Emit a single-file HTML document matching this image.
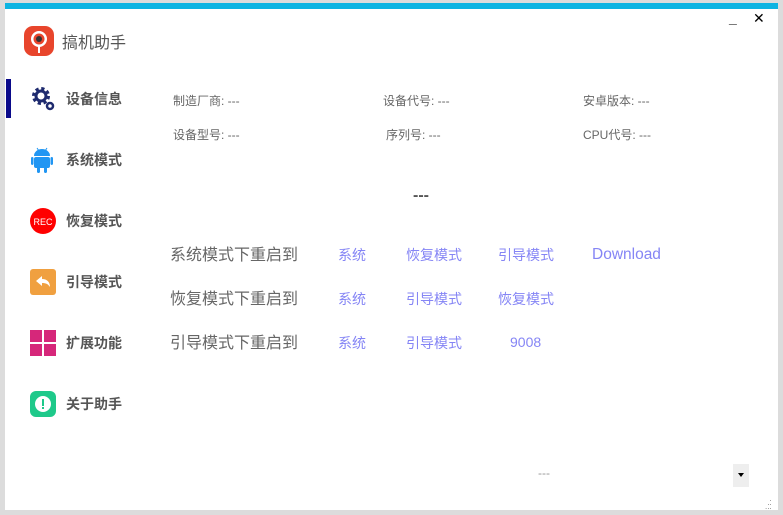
<!DOCTYPE html>
<html><head><meta charset="utf-8"><style>
*{margin:0;padding:0;box-sizing:border-box}
body{width:783px;height:515px;background:#dcdcdc;position:relative;overflow:hidden;font-family:"Liberation Sans","Noto Sans CJK SC",sans-serif;color:#555}
#win{position:absolute;left:5px;top:3px;width:773px;height:507px;background:#fff}
#bar{position:absolute;left:5px;top:3px;width:773px;height:6px;background:#0db4e2}
.a{position:absolute;white-space:nowrap}
.nav{font-size:14px;font-weight:bold;color:#555}
.s{font-size:12px;color:#666}
.big{font-size:16px;color:#666}
.l{font-size:14px;color:#8585f5}
</style></head><body>
<div id="win"></div><div id="bar"></div>
<div class="a" style="left:729px;top:10px;font-size:14px;color:#000;font-weight:bold">_</div>
<div class="a" style="left:753px;top:10px;font-size:14px;color:#000">✕</div>
<svg class="a" style="left:24px;top:26px" width="30" height="30" viewBox="0 0 30 30"><rect x="0" y="0" width="30" height="30" rx="9" fill="#e8452c"/><circle cx="15" cy="13" r="8" fill="#fff"/><circle cx="15" cy="13" r="5.5" fill="#e8452c"/><circle cx="15" cy="13" r="3" fill="#333"/><rect x="14" y="20" width="2" height="7" fill="#fff"/></svg>
<div class="a" style="left:62px;top:29px;font-size:16px;color:#555">搞机助手</div>
<div class="a" style="left:6px;top:79px;width:5px;height:39px;background:#0a0a8a"></div>
<svg class="a" style="left:31px;top:86px" width="26" height="26" viewBox="0 0 26 26"><circle cx="10" cy="10" r="7" fill="none" stroke="#1e2a6e" stroke-width="4" stroke-dasharray="3 2.5"/><circle cx="10" cy="10" r="5" fill="none" stroke="#1e2a6e" stroke-width="3"/><circle cx="19" cy="20" r="3" fill="none" stroke="#1e2a6e" stroke-width="2.5"/></svg>
<div class="a nav" style="left:66px;top:89px">设备信息</div>
<svg class="a" style="left:31px;top:146px" width="22" height="27" viewBox="0 0 22 27"><path d="M3 10a8 7 0 0 1 16 0z" fill="#2196f3"/><rect x="3" y="11" width="16" height="11" rx="2" fill="#2196f3"/><rect x="0" y="11" width="2.5" height="8" rx="1.2" fill="#2196f3"/><rect x="19.5" y="11" width="2.5" height="8" rx="1.2" fill="#2196f3"/><rect x="6" y="21" width="3" height="6" rx="1.2" fill="#2196f3"/><rect x="13" y="21" width="3" height="6" rx="1.2" fill="#2196f3"/><line x1="6" y1="2" x2="8" y2="5" stroke="#2196f3"/><line x1="16" y1="2" x2="14" y2="5" stroke="#2196f3"/></svg>
<div class="a nav" style="left:66px;top:150px">系统模式</div>
<svg class="a" style="left:30px;top:208px" width="26" height="26"><circle cx="13" cy="13" r="13" fill="#f00"/><text x="13" y="17" font-size="9" fill="#fff" text-anchor="middle" font-family="Liberation Sans">REC</text></svg>
<div class="a nav" style="left:66px;top:211px">恢复模式</div>
<svg class="a" style="left:30px;top:269px" width="26" height="26"><rect width="26" height="26" rx="3" fill="#f0a040"/><path d="M6 12l6-5v3c5 0 8 3 8 8-2-3-4-4-8-4v3z" fill="#fff"/></svg>
<div class="a nav" style="left:66px;top:272px">引导模式</div>
<svg class="a" style="left:30px;top:330px" width="26" height="26"><rect x="0" y="0" width="12" height="12" fill="#d6277a"/><rect x="14" y="0" width="12" height="12" fill="#d6277a"/><rect x="0" y="14" width="12" height="12" fill="#d6277a"/><rect x="14" y="14" width="12" height="12" fill="#d6277a"/></svg>
<div class="a nav" style="left:66px;top:333px">扩展功能</div>
<svg class="a" style="left:30px;top:391px" width="26" height="26"><rect width="26" height="26" rx="6" fill="#1ec98a"/><circle cx="13" cy="13" r="8" fill="#fff"/><rect x="12" y="8" width="2" height="7" fill="#1ec98a"/><rect x="12" y="16" width="2" height="2" fill="#1ec98a"/></svg>
<div class="a nav" style="left:66px;top:394px">关于助手</div>
<div class="a s" style="left:173px;top:92px">制造厂商: ---</div>
<div class="a s" style="left:383px;top:92px">设备代号: ---</div>
<div class="a s" style="left:583px;top:92px">安卓版本: ---</div>
<div class="a s" style="left:173px;top:126px">设备型号: ---</div>
<div class="a s" style="left:386px;top:126px">序列号: ---</div>
<div class="a s" style="left:583px;top:126px">CPU代号: ---</div>
<div class="a" style="left:413px;top:187px;font-size:16px;color:#555;font-weight:bold">---</div>
<div class="a big" style="left:170px;top:241px">系统模式下重启到</div>
<div class="a l" style="left:338px;top:245px">系统</div>
<div class="a l" style="left:406px;top:245px">恢复模式</div>
<div class="a l" style="left:498px;top:245px">引导模式</div>
<div class="a" style="left:592px;top:246px;font-size:15.5px;color:#8585f5">Download</div>
<div class="a big" style="left:170px;top:285px">恢复模式下重启到</div>
<div class="a l" style="left:338px;top:289px">系统</div>
<div class="a l" style="left:406px;top:289px">引导模式</div>
<div class="a l" style="left:498px;top:289px">恢复模式</div>
<div class="a big" style="left:170px;top:329px">引导模式下重启到</div>
<div class="a l" style="left:338px;top:333px">系统</div>
<div class="a l" style="left:406px;top:333px">引导模式</div>
<div class="a" style="left:510px;top:334px;font-size:14px;color:#8585f5">9008</div>
<div class="a" style="left:538px;top:466px;font-size:12px;color:#999">---</div>
<div class="a" style="left:733px;top:464px;width:16px;height:23px;background:#eee"></div>
<div class="a" style="left:738px;top:473px;width:0;height:0;border-left:3px solid transparent;border-right:3px solid transparent;border-top:4px solid #000"></div>
<div class="a" style="left:765px;top:497px;font-size:8px;color:#777;line-height:4px">&nbsp;&nbsp;.<br>&nbsp;..<br>...</div>
</body></html>
